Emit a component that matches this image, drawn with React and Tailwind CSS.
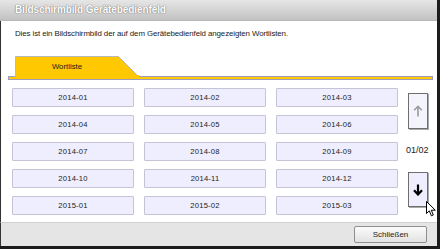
import React from "react";

const items = [
  "2014-01", "2014-02", "2014-03",
  "2014-04", "2014-05", "2014-06",
  "2014-07", "2014-08", "2014-09",
  "2014-10", "2014-11", "2014-12",
  "2015-01", "2015-02", "2015-03",
];

export default function App() {
  return (
    <div className="relative w-[440px] h-[249px] flex flex-col overflow-hidden border-r-[3px] border-b-[3px] border-[#1c1c1c] font-['Liberation_Sans',Arial,sans-serif]">
      <div className="h-[21px] shrink-0 flex items-center pl-[15px] bg-gradient-to-b from-[#e6e6e6] to-[#c2c2c2] border-b border-[#b8b8b8]">
        <span className="text-white font-bold text-[10px] leading-none tracking-[-0.1px] [text-shadow:0_0_1px_#666,0_0_1px_#888]">
          Bildschirmbild Gerätebedienfeld
        </span>
      </div>
      <div className="flex-1 flex flex-col bg-white border-l border-[#333]">
        <div className="h-[25px] pt-[8px] pl-[14px] text-[7.9px] leading-[10px] text-[#1a1a1a] tracking-[-0.1px]">
          Dies ist ein Bildschirmbild der auf dem Gerätebedienfeld angezeigten Wortlisten.
        </div>
        <div className="mt-[10px] flex items-end h-[20px] pl-[14px]">
          <div className="relative z-10 -mb-[1px] w-[125px] h-[21px] flex items-center">
            <svg width="125" height="21" className="absolute inset-0">
              <polygon points="0.5,21 0.5,0.5 103.5,0.5 124,21" fill="#ffc800" stroke="#b9b9b9" strokeWidth="1" />
              <rect x="1" y="19" width="123" height="2" fill="#ffc800" />
            </svg>
            <span className="relative w-[104px] text-center text-[7.8px] text-[#1a1a1a] leading-none">Wortliste</span>
          </div>
        </div>
        <div className="ml-[7px] mr-[4px] h-[4px] bg-[#ffc800] border border-[#9c9cbc]" />
        <div className="flex mt-[8px] pl-[11px]">
          <div className="grid grid-cols-[122px_122px_122px] gap-x-[10px] gap-y-[8px]">
            {items.map((t) => (
              <div
                key={t}
                className="h-[19px] flex items-center justify-center bg-[#eeeeff] border border-[#c4c4d6] rounded-[1px] text-[7.6px] text-[#222] leading-none tracking-[0.2px]"
              >
                {t}
              </div>
            ))}
          </div>
          <div className="ml-[8px] w-[26px] flex flex-col">
            <div className="mt-[5px] ml-[2px] w-[20px] h-[36px] flex items-center justify-center bg-[#f4f4fc] border border-[#6e6e6e] shadow-[1px_1px_0_#aaa]">
              <svg width="10" height="12" viewBox="0 0 10 12">
                <path d="M5 11.5V1.5M1.2 5.2L5 1.3 8.8 5.2" fill="none" stroke="#9a9a9a" strokeWidth="1.6" />
              </svg>
            </div>
            <div className="h-[43px] flex items-center text-[9px] text-[#222] leading-none">01/02</div>
            <div className="ml-[2px] w-[20px] h-[35px] flex items-center justify-center bg-[#eeeeff] border border-[#6e6e6e] shadow-[1px_1px_0_#aaa]">
              <svg width="10" height="12" viewBox="0 0 10 12">
                <path d="M5 0.5V10M1 6.2L5 10.5 9 6.2" fill="none" stroke="#000" strokeWidth="2.2" />
              </svg>
            </div>
          </div>
        </div>
      </div>
      <div className="h-[24px] shrink-0 flex items-center justify-end pr-[10px] bg-[#e5e5e5] border-t border-[#d0d0d0] border-l border-l-[#333]">
        <div className="w-[73px] h-[17px] flex items-center justify-center rounded-[2px] border border-[#8e8e8e] bg-gradient-to-b from-[#fbfbfb] to-[#e2e2e2] text-[8px] text-[#222] leading-none">
          Schließen
        </div>
      </div>
      <svg width="11" height="17" viewBox="0 0 11 17" className="absolute left-[426px] top-[201px]">
        <path d="M0.5 0.5L0.5 12.5 3.3 9.8 5.4 14.8 7.3 14 5.3 9.2 9.3 9.2Z" fill="#fff" stroke="#000" strokeWidth="1" strokeLinejoin="round" />
      </svg>
    </div>
  );
}
